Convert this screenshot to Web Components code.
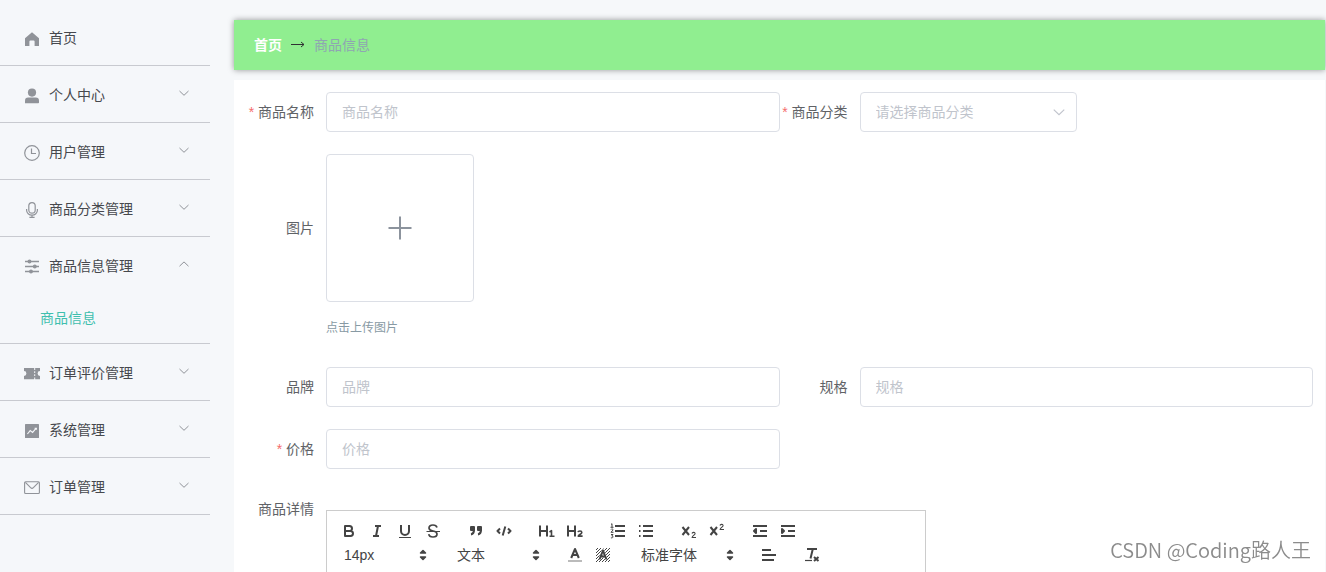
<!DOCTYPE html>
<html lang="zh-CN">
<head>
<meta charset="utf-8">
<title>商品信息</title>
<style>
  html, body { margin: 0; height: 100%; }
  body {
    background: #f6f8fa;
    color: #606266;
    font: 14px/20px "Liberation Sans", "Noto Sans CJK SC", sans-serif;
    overflow: hidden;
  }
</style>
</head>
<body>
<admin-shell>
  <side-menu slot="side">
    <menu-entry icon="home" leaf>首页</menu-entry>
    <menu-entry icon="user">个人中心</menu-entry>
    <menu-entry icon="clock">用户管理</menu-entry>
    <menu-entry icon="mic">商品分类管理</menu-entry>
    <menu-entry icon="sliders" open>商品信息管理<a slot="sub" href="#goods">商品信息</a></menu-entry>
    <menu-entry icon="ticket">订单评价管理</menu-entry>
    <menu-entry icon="chart">系统管理</menu-entry>
    <menu-entry icon="mail">订单管理</menu-entry>
  </side-menu>
  <crumb-bar home="首页">商品信息</crumb-bar>
  <goods-form></goods-form>
</admin-shell>
<water-mark>CSDN @Coding路人王</water-mark>

<script>
const ICONS = {
  home: ['0 0 16 16', '<path fill="currentColor" d="M8 1.2 15 7.2V15h-4.4v-4.6a1 1 0 0 0-1-1H6.4a1 1 0 0 0-1 1V15H1V7.2z"/>'],
  user: ['0 0 16 16', '<g fill="currentColor"><circle cx="8" cy="4.6" r="4.1"/><path d="M1 15.2v-2.4A3.2 3.2 0 0 1 4.2 9.6h7.6a3.2 3.2 0 0 1 3.2 3.2v1.6a.8.8 0 0 1-.8.8z"/></g>'],
  clock: ['0 0 16 16', '<g fill="none" stroke="currentColor" stroke-width="1.2"><circle cx="8" cy="8" r="7.3"/><path d="M7.5 3.5v5H12"/></g>'],
  mic: ['0 0 16 16', '<g fill="none" stroke="currentColor" stroke-width="1.2"><rect x="4.8" y=".6" width="6.4" height="10.6" rx="3.2"/><path d="M2.6 7v1.2a5.4 5 0 0 0 10.8 0V7M8 13v2.4M5.4 15.4h5.2"/></g>'],
  sliders: ['0 0 16 16', '<g stroke="currentColor" stroke-width="1.3"><path d="M1 2.500h14M1 7.500h14M1 12.500h14"/><circle cx="5.500" cy="2.500" r="1.300" fill="currentColor"/><circle cx="10.800" cy="7.500" r="1.300" fill="currentColor"/><circle cx="7" cy="12.500" r="1.300" fill="currentColor"/></g>'],
  ticket: ['0 0 16 16', '<path fill="currentColor" d="M0 2.1h10.2v1.8h1V2.1H16v3a2.4 2.4 0 0 0 0 4.8v3.4h-4.8V11.500h-1v1.800H0V9.900a2.4 2.4 0 0 0 0-4.800zM10.2 5.3v1.6h1V5.3zm0 3v1.6h1V8.3z"/>'],
  chart: ['0 0 16 16', '<rect x="1" y="1" width="14" height="14" rx=".6" fill="currentColor"/><path d="m3.4 11 2.8-3.4 2.4 1.8 3.6-4.2M10.6 5.2h1.8v1.6" fill="none" stroke="#f5f7fa" stroke-width="1.1"/>'],
  mail: ['0 0 16 16', '<g fill="none" stroke="currentColor" stroke-width="1.1"><rect x=".6" y="1.700" width="14.8" height="11.8" rx="1"/><path d="m1.4 2.3 5.2 5.4a2 2 0 0 0 2.8 0l5.2-5.4"/></g>'],
  down: ['0 0 12 12', '<path d="m1.5 4 4.5 4.3L10.500 4" fill="none" stroke="currentColor"/>'],
  up: ['0 0 12 12', '<path d="M1.500 8.200 6 3.900l4.500 4.300" fill="none" stroke="currentColor"/>'],
  arrow: ['0 0 16 16', '<path d="M1 7.500h13M11 5l3 2.500-3 2.500" fill="none" stroke="currentColor"/>'],
  plus: ['0 0 28 28', '<path d="M14 2.500v23M2.500 14h23" fill="none" stroke="currentColor" stroke-width="2"/>'],
  sort: ['0 0 18 18', '<path fill="currentColor" stroke="currentColor" stroke-width="1.500" stroke-linejoin="round" d="M6.500 7 9 4.500 11.500 7zM6.500 11 9 13.500 11.500 11z"/>'],
  bold: ['0 0 18 18', '<path class="s" d="M5 4h4.500a2.500 2.500 0 0 1 0 5H5zM5 9h5.500a2.500 2.500 0 0 1 0 5H5z"/>'],
  italic: ['0 0 18 18', '<path class="s" d="M7 4h6M5 14h6M8 14l2-10"/>'],
  underline: ['0 0 18 18', '<path class="s" d="M5 3v6a4 4 0 0 0 8 0V3"/><rect class="f" x="3" y="15" width="12" height="1"/>'],
  strike: ['0 0 18 18', '<path class="s" style="stroke-width:1.700" d="M13 5.500C12.500 3.700 11 3 9 3 6.500 3 5 4.300 5 6c0 2 2 2.600 4 3s4 1.200 4 3c0 2-1.600 3-4 3s-4-1-4.200-2.800"/><path class="s" style="stroke-width:1" d="M2.500 9.500h13.500"/>'],
  quote: ['0 0 18 18', '<path class="f s" d="M4 5h3v3H4zM11 5h3v3h-3z"/><path class="s" d="M7 8c0 2.600-.6 4-3 4.500M14 8c0 2.600-.6 4-3 4.500"/>'],
  code: ['0 0 18 18', '<path class="s" d="M5 6.500 2.500 9 5 11.500M13 6.500 15.500 9 13 11.500M10.300 4.500l-2.600 9"/>'],
  h1: ['0 0 18 18', '<path class="s" d="M2 3.500v11M9 3.500v11M2 9h7"/><path class="s" style="stroke-width:1.600" d="m11.500 10 2-1.400V14M11.500 14.200h5"/>'],
  h2: ['0 0 18 18', '<path class="s" d="M2 3.500v11M9 3.500v11M2 9h7"/><path class="s" style="stroke-width:1.600" d="M12 10.200c.3-1.600 3.800-1.700 3.800.2 0 1.500-2.400 1.800-3.600 3.700h4.400"/>'],
  ol: ['0 0 18 18', '<path class="s" d="M6 4h10M6 9h10M6 14h10"/><path class="s" style="stroke-width:1" d="m2 2.500 1-.8v3.500M1.500 5.300h3M2 7.500c.5-1 2.400-.6 1.900.6L2 10.300h2.500M2 12.500h2L2.800 14c2 0 1.500 2.400-.9 1.800"/>'],
  ul: ['0 0 18 18', '<path class="s" d="M6 4h10M6 9h10M6 14h10M2 4h1.500M2 9h1.500M2 14h1.500"/>'],
  sub: ['0 0 18 18', '<path class="s" d="m2.500 5 6.500 8M9 5l-6.500 8"/><path class="s" style="stroke-width:1.100" d="M12 11.500c.4-1.700 3.500-1.500 3 .4-.3 1-2.200 1.800-2.900 3.600H16"/>'],
  sup: ['0 0 18 18', '<path class="s" d="m2.500 5 6.500 8M9 5l-6.500 8"/><path class="s" style="stroke-width:1.100" d="M12 3.500c.4-1.700 3.500-1.500 3 .4-.3 1-2.200 1.800-2.900 3.600H16"/>'],
  outdent: ['0 0 18 18', '<path class="s" d="M2 14h14M2 4h14M9 9h7"/><path class="f s" d="M5 7v4L3 9z"/>'],
  indent: ['0 0 18 18', '<path class="s" d="M2 14h14M2 4h14M9 9h7"/><path class="f s" d="M3 7v4l2-2z"/>'],
  color: ['0 0 18 18', '<path fill="#bbb" d="M2 14h14v2H2z"/><path class="s" d="m5.200 12 3.800-9 3.800 9M6.500 9h5"/>'],
  back: ['0 0 18 18', '<path d="M2 4l2-2M2 7l5-5M2 10l8-8M2 13 13 2M2 16 16 2M5 16 16 5M8 16l8-8M11 16l5-5M14 16l2-2" stroke="#444" fill="none"/><path d="m5.500 13.500 3.500-9 3.500 9M6.500 10.500h5" stroke="#fff" stroke-width="3" fill="none" opacity=".6"/><path class="s" d="m5.500 13.500 3.500-9 3.500 9M6.500 10.500h5"/>'],
  align: ['0 0 18 18', '<path class="s" d="M2 4h9M2 9h14M2 14h12"/>'],
  clean: ['0 0 18 18', '<path class="s" d="M4 3h10M9.800 3 7.500 12.500"/><path class="s" style="stroke-width:1.200" d="M2 14.500h7"/><path class="s" d="m11 11 4.500 4M15.500 11l-4.500 4"/>']
};

const define = (name, html) => customElements.define(name, class extends HTMLElement {
  constructor() {
    super();
    this.attachShadow({ mode: 'open' });
  }
  connectedCallback() {
    this.shadowRoot.innerHTML = typeof html === 'function' ? html(this) : html;
  }
});

define('ui-icon', el => {
  const [box, body] = ICONS[el.getAttribute('name')];
  return `<style>
    :host { display: block; width: 16px; height: 16px; flex: none; }
    svg { display: block; width: 100%; height: 100%; }
    .s { fill: none; stroke: currentColor; stroke-width: 2; stroke-linejoin: round; }
    .f { fill: currentColor; }
  </style><svg viewBox="${box}" aria-hidden="true">${body}</svg>`;
});

define('admin-shell', `<style>
  :host { display: grid; grid-template-columns: 210px minmax(0, 1fr); column-gap: 24px; box-sizing: border-box; height: 100vh; padding-right: 1px; overflow: hidden; }
  main { display: flex; flex-direction: column; gap: 10px; padding-top: 20px; }
</style><slot name="side"></slot><main><slot></slot></main>`);

define('side-menu', `<style>
  :host { display: block; background: #f5f7fa; padding-top: 9px; }
</style><nav><slot></slot></nav>`);

define('menu-entry', el => {
  const leaf = el.hasAttribute('leaf'), open = el.hasAttribute('open');
  const inner = `<ui-icon name="${el.getAttribute('icon')}"></ui-icon><span><slot></slot></span>`;
  return `<style>
    :host { display: block; border-bottom: 1px solid #c8cad0; color: #46484d; }
    .row { display: flex; align-items: center; gap: 9px; box-sizing: border-box; width: 100%; height: 56px; padding: 2px 20px 0 24px;
      border: 0; background: none; color: inherit; font: inherit; text-align: left; text-decoration: none; }
    span { flex: 1; }
    ui-icon { color: #909399; padding-top: 2px; }
    .chev { width: 12px; height: 12px; padding: 0 0 4px; }
    ::slotted(a) { display: block; line-height: 50px; padding-left: 40px; color: #3fbfae; text-decoration: none; }
  </style>` + (leaf
    ? `<a class="row" href="#home">${inner}</a>`
    : `<button class="row" type="button" aria-expanded="${open}">${inner}<ui-icon class="chev" name="${open ? 'up' : 'down'}"></ui-icon></button>`)
    + `<slot name="sub"></slot>`;
});

define('crumb-bar', el => `<style>
  :host { display: block; background: #90ee90; box-shadow: 0 0 6px rgba(0, 0, 0, .4); }
  nav { display: flex; align-items: center; gap: 8px; height: 50px; padding: 0 20px; }
  a { color: #fff; font-weight: 700; text-decoration: none; }
  ui-icon { color: #303133; }
  span { color: #8fa5b2; }
</style><nav aria-label="位置"><a href="#home">${el.getAttribute('home')}</a><ui-icon name="arrow"></ui-icon><span><slot></slot></span></nav>`);

define('form-field', el => {
  const label = el.getAttribute('label'), type = el.getAttribute('type') || 'text';
  const req = el.hasAttribute('required') ? '<i>*</i> ' : '';
  const control = {
    text: `<input id="c" type="text" placeholder="${label}">`,
    select: `<div class="pick"><select id="c"><option>请选择${label}</option></select><ui-icon name="down"></ui-icon></div>`,
    upload: `<button id="c" type="button" aria-label="点击上传图片"><ui-icon name="plus"></ui-icon></button><p>点击上传图片</p>`,
    editor: `<rich-editor id="c"></rich-editor>`
  }[type];
  return `<style>
    :host { display: grid; grid-template-columns: 80px minmax(0, 1fr); }
    label { box-sizing: border-box; padding-right: 12px; text-align: right; line-height: 40px; color: #606266; white-space: nowrap; }
    label.upload { line-height: 148px; }
    label.editor { line-height: 36px; }
    i { color: #f56c6c; font-style: normal; }
    input, select, button { display: block; box-sizing: border-box; width: 100%; height: 40px; margin: 0; padding: 0 15px;
      border: 1px solid #dcdfe6; border-radius: 4px; background: #fff; color: #606266; font: inherit; }
    input::placeholder { color: #c0c4cc; }
    .pick { display: grid; width: 217px; align-items: center; color: #c0c4cc; }
    .pick > * { grid-area: 1 / 1; }
    select { appearance: none; color: #c0c4cc; }
    .pick ui-icon { width: 14px; height: 14px; justify-self: end; margin-right: 11px; pointer-events: none; }
    button { display: grid; place-items: center; width: 148px; height: 148px; padding: 0; color: #8c939d; }
    button ui-icon { width: 28px; height: 28px; }
    p { margin: 16px 0 7px; font-size: 12px; color: #889aa4; }
    rich-editor { margin-top: 19px; }
  </style><label class="${type}" for="c">${req}${label}</label><div>${control}</div>`;
});

define('tool-button', el => `<style>
  :host { display: block; }
  button { display: block; width: 28px; height: 24px; padding: 3px 5px; border: 0; background: none; color: #444; }
  ui-icon { width: 18px; height: 18px; }
</style><button type="button" aria-label="${el.getAttribute('icon')}"><ui-icon name="${el.getAttribute('icon')}"></ui-icon></button>`);

define('tool-picker', el => `<style>
  :host { display: grid; align-items: center; width: 98px; height: 24px; color: #444; }
  :host([wide]) { width: 108px; }
  select, ui-icon { grid-area: 1 / 1; }
  select { appearance: none; width: 100%; height: 24px; margin: 0; padding: 0 9px; border: 0; background: none; color: inherit; font: inherit; }
  ui-icon { width: 18px; height: 18px; justify-self: end; margin-right: 1px; pointer-events: none; }
</style><select aria-label="${el.getAttribute('name')}"><option>${el.getAttribute('value')}</option></select><ui-icon name="sort"></ui-icon>`);

const group = names => `<div class="group">${names.split(' ').map(n => `<tool-button icon="${n}"></tool-button>`).join('')}</div>`;

define('rich-editor', `<style>
  :host { display: block; box-sizing: border-box; max-width: 600px; border: 1px solid #ccc; }
  header { padding: 8px; border-bottom: 1px solid #ccc; }
  .line { display: flex; flex-wrap: wrap; column-gap: 15px; }
  .group { display: flex; }
  .text { min-height: 200px; padding: 12px 15px; }
</style><header>
  <div class="line">${group('bold italic underline strike')}${group('quote code')}${group('h1 h2')}${group('ol ul')}${group('sub sup')}${group('outdent indent')}</div>
  <div class="line"><tool-picker name="字号" value="14px"></tool-picker><tool-picker name="段落" value="文本"></tool-picker>
  ${group('color back')}<tool-picker wide name="字体" value="标准字体"></tool-picker>${group('align')}${group('clean')}</div>
</header><div class="text" contenteditable="true" role="textbox" aria-label="商品详情"></div>`);

define('goods-form', `<style>
  :host { display: block; background: #fff; flex: 1 0 auto; }
  form { display: grid; grid-template-columns: repeat(2, minmax(0, 1fr)); row-gap: 22px; padding: 12px; }
  .full { grid-column: 1 / -1; }
</style><form>
  <form-field label="商品名称" required></form-field>
  <form-field label="商品分类" type="select" required></form-field>
  <form-field class="full" label="图片" type="upload"></form-field>
  <form-field label="品牌"></form-field>
  <form-field label="规格"></form-field>
  <form-field label="价格" required></form-field>
  <form-field class="full" label="商品详情" type="editor"></form-field>
</form>`);

define('water-mark', `<style>
  :host { position: fixed; right: 15px; bottom: 7px; color: #8c8c8c; font: 350 20px/30px "Noto Sans CJK SC", sans-serif; pointer-events: none; }
</style><slot></slot>`);
</script>
</body>
</html>
